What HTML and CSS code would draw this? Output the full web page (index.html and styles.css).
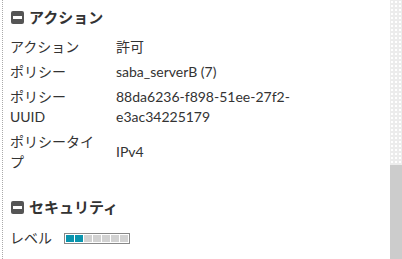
FILE: index.html
```html
<!DOCTYPE html>
<html lang="ja">
<head>
    <meta charset="UTF-8">
    <meta name="viewport" content="width=device-width, initial-scale=1.0">
    <title>ポリシー詳細</title>
    <link rel="stylesheet" href="styles.css">
</head>
<body>

    <div class="frame">
        <div class="content">
            <!-- Action section -->
            <div class="section">
                <h3 class="section-title"><span class="toggle"></span>アクション</h3>
                <div class="rows">
                    <div class="label">アクション</div>
                    <div class="value">許可</div>
                    <div class="label">ポリシー</div>
                    <div class="value">saba_serverB (7)</div>
                    <div class="label">ポリシー<br>UUID</div>
                    <div class="value">88da6236-f898-51ee-27f2-e3ac34225179</div>
                    <div class="label">ポリシータイプ</div>
                    <div class="value">IPv4</div>
                </div>
            </div>

            <!-- Security section -->
            <div class="section section-security">
                <h3 class="section-title"><span class="toggle"></span>セキュリティ</h3>
                <div class="level-row">
                    <span class="label">レベル</span>
                    <div class="level-bar">
                        <span class="seg on"></span>
                        <span class="seg on"></span>
                        <span class="seg"></span>
                        <span class="seg"></span>
                        <span class="seg"></span>
                        <span class="seg"></span>
                        <span class="seg"></span>
                    </div>
                </div>
            </div>
        </div>

        <div class="scrollbar">
            <div class="track"></div>
            <div class="thumb"></div>
        </div>
    </div>

</body>
</html>
```

FILE: styles.css
```css
body {
    margin: 0;
    background: white;
    font-family: Lato, "Noto Sans CJK JP", sans-serif;
    font-size: 14px;
    color: #333;
}

.frame {
    display: flex;
    height: 259px;
    overflow: hidden;
}

.content {
    flex: 1;
    margin-left: 2px;
    border-left: 1px dotted #aaa;
    padding: 7px 8px 0 7px;
}

.section-title {
    display: flex;
    align-items: center;
    margin: 0;
    font-size: 15px;
    line-height: 20px;
    font-weight: bold;
    color: #333;
}

.toggle {
    position: relative;
    width: 13px;
    height: 13px;
    margin: 0 5px 0 1px;
    background: #555;
    border-radius: 2px;
}

.toggle::after {
    content: "";
    position: absolute;
    left: 2px;
    right: 2px;
    top: 5px;
    height: 3px;
    background: white;
}

.rows {
    display: grid;
    grid-template-columns: 90px 1fr;
    column-gap: 16px;
    row-gap: 5px;
    margin-top: 10px;
    line-height: 20px;
    align-items: center;
}

.section-security {
    margin-top: 25px;
}

.level-row {
    display: flex;
    align-items: center;
    margin-top: 11px;
    line-height: 20px;
}

.level-bar {
    display: flex;
    gap: 1px;
    margin-left: 12px;
    padding: 1px;
    border: 1px solid #888;
}

.seg {
    width: 8px;
    height: 7px;
    background: #d2d2d2;
}

.seg.on {
    background: #0a94ad;
}

.scrollbar {
    width: 12px;
    display: flex;
    flex-direction: column;
}

.track {
    height: 165px;
    background-color: #ececec;
    background-image: radial-gradient(circle, white 0.8px, transparent 1px);
    background-size: 4px 4px;
}

.thumb {
    flex: 1;
    background: #cccccc;
}
```
